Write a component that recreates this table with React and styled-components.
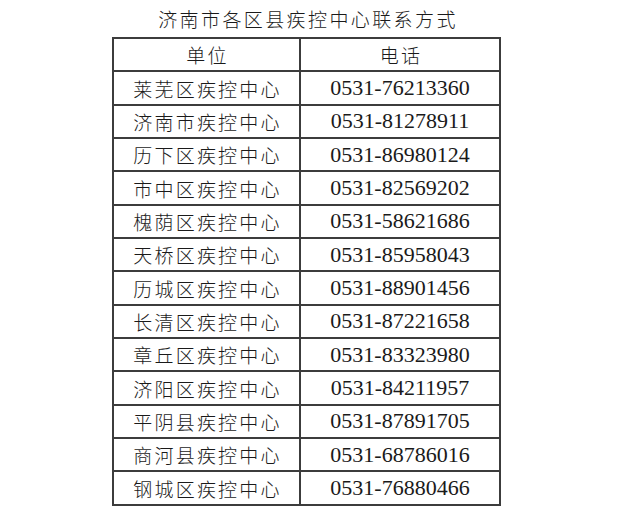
import React from "react";
import styled, { createGlobalStyle } from "styled-components";

const GlobalStyle = createGlobalStyle`
  html, body {
    margin: 0;
    padding: 0;
    background: #ffffff;
  }
`;

const PAGE = styled.div`
  width: 640px;
  height: 531px;
  background: #ffffff;
  padding-left: 112px;
  box-sizing: border-box;
  overflow: hidden;
`;

const WRAP = styled.div`
  width: 389px;
  display: flex;
  flex-direction: column;
`;

const TITLE = styled.div`
  height: 37px;
  display: flex;
  align-items: center;
  justify-content: center;
  padding-left: 3px;
  font-family: "Noto Sans CJK SC", sans-serif;
  font-weight: 300;
  font-size: 19px;
  letter-spacing: 2.4px;
  color: #1a1a1a;
`;

const GRID = styled.div`
  display: grid;
  grid-template-columns: 187px 200px;
  border-top: 2px solid #3c3c3c;
  border-left: 2px solid #3c3c3c;
`;

const CELL = styled.div`
  height: 31.35px;
  display: flex;
  align-items: center;
  justify-content: center;
  border-right: 2px solid #3c3c3c;
  border-bottom: 2px solid #3c3c3c;
  color: #1a1a1a;
  font-family: ${(p) =>
    p.$num ? '"Liberation Serif", serif' : '"Noto Sans CJK SC", sans-serif'};
  font-weight: ${(p) => (p.$num ? 400 : 300)};
  font-size: ${(p) => (p.$num ? "22px" : "19px")};
  letter-spacing: ${(p) => (p.$num ? "0" : "2.2px")};
  padding-left: ${(p) => (p.$num ? "0" : "2px")};
`;

const rows = [
  ["莱芜区疾控中心", "0531-76213360"],
  ["济南市疾控中心", "0531-81278911"],
  ["历下区疾控中心", "0531-86980124"],
  ["市中区疾控中心", "0531-82569202"],
  ["槐荫区疾控中心", "0531-58621686"],
  ["天桥区疾控中心", "0531-85958043"],
  ["历城区疾控中心", "0531-88901456"],
  ["长清区疾控中心", "0531-87221658"],
  ["章丘区疾控中心", "0531-83323980"],
  ["济阳区疾控中心", "0531-84211957"],
  ["平阴县疾控中心", "0531-87891705"],
  ["商河县疾控中心", "0531-68786016"],
  ["钢城区疾控中心", "0531-76880466"],
];

export default function App() {
  return (
    <>
      <GlobalStyle />
      <PAGE>
        <WRAP>
          <TITLE>济南市各区县疾控中心联系方式</TITLE>
          <GRID>
            <CELL>单位</CELL>
            <CELL>电话</CELL>
            {rows.map(([name, tel]) => (
              <React.Fragment key={name}>
                <CELL>{name}</CELL>
                <CELL $num>{tel}</CELL>
              </React.Fragment>
            ))}
          </GRID>
        </WRAP>
      </PAGE>
    </>
  );
}
